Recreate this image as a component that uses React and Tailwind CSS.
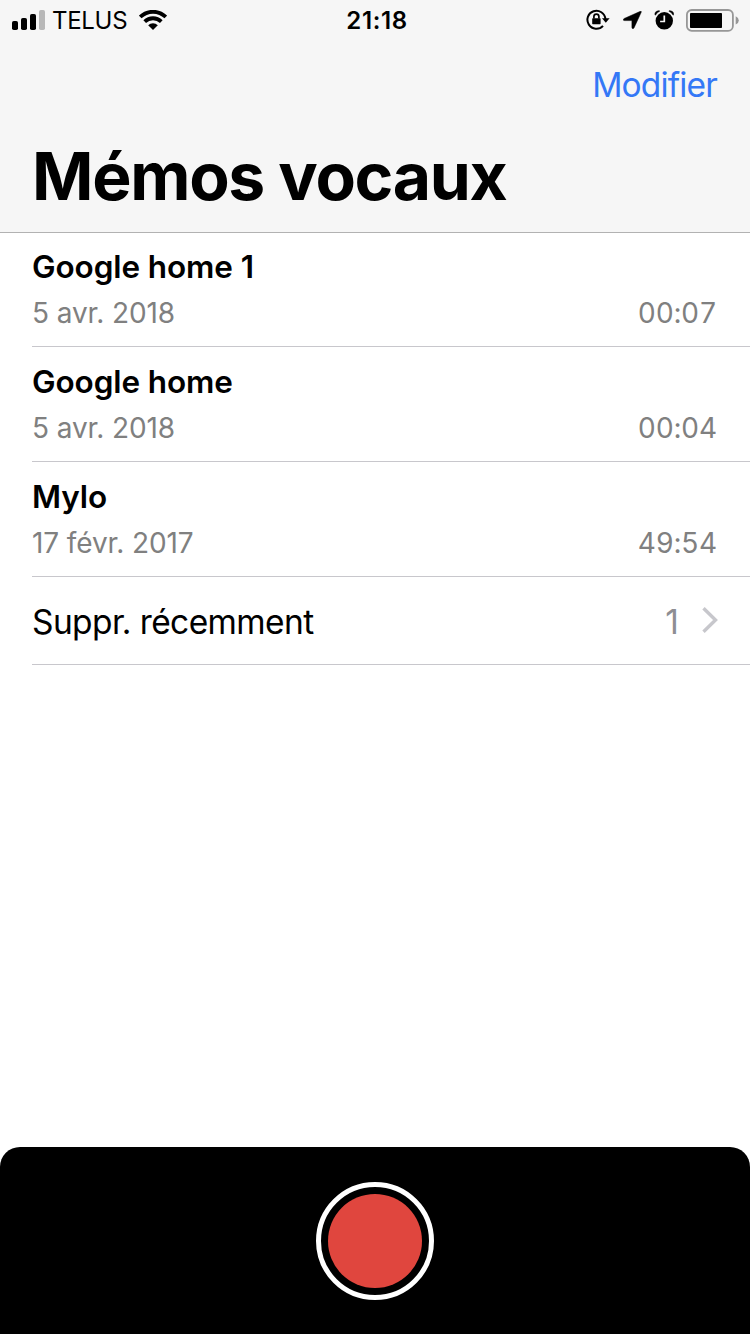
const memos = [
  { title: "Google home 1", date: "5 avr. 2018", length: "00:07" },
  { title: "Google home", date: "5 avr. 2018", length: "00:04" },
  { title: "Mylo", date: "17 févr. 2017", length: "49:54" },
];

function SignalIcon() {
  return (
    <svg width="33" height="20" viewBox="0 0 33 20">
      <rect x="0" y="11" width="6" height="9" rx="1.8" />
      <rect x="9" y="8" width="6" height="12" rx="1.8" />
      <rect x="18" y="4" width="6" height="16" rx="1.8" />
      <rect x="27" y="0" width="6" height="20" rx="1.8" fill="#b8b8b8" />
    </svg>
  );
}

function WifiIcon() {
  return (
    <svg width="28" height="20" viewBox="0 0 28 20">
      <g fill="none" stroke="#000" strokeWidth="3.8">
        <path d="M1.200 7A18.200 18.200 0 0 1 26.800 7" />
        <path d="M5.700 11.600A12 12 0 0 1 22.300 11.600" />
      </g>
      <path d="M9.200 15.200A6.800 6.800 0 0 1 18.800 15.200L14 20Z" />
    </svg>
  );
}

function LockIcon() {
  return (
    <svg width="24" height="22" viewBox="0 0 24 22">
      <path d="M17 16.900A9 9 0 1 1 19.400 10" fill="none" stroke="#000" strokeWidth="2" />
      <path d="M16 9.200H23.600L19.800 13.800Z" />
      <rect x="6.200" y="9.200" width="8.400" height="6" rx="0.6" />
      <path d="M7.900 9.500V7.600a2.500 2.500 0 0 1 5 0v1.900" fill="none" stroke="#000" strokeWidth="1.700" />
    </svg>
  );
}

function LocationIcon() {
  return (
    <svg width="19" height="18" viewBox="0 0 19 18">
      <path
        d="M17.400 0.300Q18.700 -0.100 18.200 1.300L11 16.900Q10.300 18.100 9.400 17.500Q8.900 17.200 8.900 16.500V10.200Q8.900 9.600 8.300 9.600H1.600Q0.300 9.500 0.300 8.700Q0.300 8 1.200 7.500Z"
        stroke="#000"
        strokeWidth="0.5"
      />
    </svg>
  );
}

function AlarmIcon() {
  return (
    <svg width="20" height="20" viewBox="0 0 20 20">
      <circle cx="10.300" cy="10.800" r="8.700" />
      <path d="M0.800 4.600Q0.600 1 5.200 0.600L5.800 1.200Q3 2.400 1.500 5.200ZM19.800 4.600Q20 1 15.400 0.600L14.800 1.200Q17.600 2.400 19.100 5.200Z" stroke="#000" strokeWidth="0.4" />
      <path d="M10.300 5.500V11.500H6.100" fill="none" stroke="#f6f6f6" strokeWidth="1.700" />
    </svg>
  );
}

function BatteryIcon() {
  return (
    <svg width="53" height="23" viewBox="0 0 53 23">
      <rect x="0.900" y="1" width="46" height="20.800" rx="4.800" fill="none" stroke="#979797" strokeWidth="1.800" />
      <rect x="4" y="4" width="32" height="15" rx="0.800" />
      <path d="M49.700 7.200Q52.800 8.700 52.800 11.400T49.700 15.600Z" fill="#979797" />
    </svg>
  );
}

function StatusBar() {
  return (
    <div className="grid h-10 grid-cols-3 items-center text-[24px]">
      <div className="flex h-10 items-center pl-3">
        <SignalIcon />
        <span className="mt-[2px] ml-[7px] w-[75px] tracking-[-0.3px]">TELUS</span>
        <span className="ml-3"><WifiIcon /></span>
      </div>
      <span className="mt-[2px] pl-1 text-center font-semibold tracking-[0.6px]">21:18</span>
      <div className="flex h-10 items-center justify-end pr-[11px]">
        <LockIcon />
        <span className="ml-[13px]"><LocationIcon /></span>
        <span className="ml-3"><AlarmIcon /></span>
        <span className="ml-3"><BatteryIcon /></span>
      </div>
    </div>
  );
}

export default function App() {
  return (
    <main className="flex h-[1334px] w-[750px] flex-col bg-white font-['Inter',sans-serif] text-black">
      <header className="h-[233px] border-b border-[#b2b2b2] bg-[#f6f6f6]">
        <StatusBar />
        <div className="flex h-[88px] items-center justify-end pt-[2px] pr-[33px] text-[33.5px] tracking-[-0.85px] text-[#3478f6]">
          Modifier
        </div>
        <h1 className="pl-8 text-[66px] leading-[97px] font-bold tracking-[-1.3px]">Mémos vocaux</h1>
      </header>
      <div className="-mt-px">
        {memos.map((m) => (
          <section key={m.title} className="ml-8 h-[115px] border-b border-[#c8c7cc] pr-[33px]">
            <h2 className="pt-[13px] text-[31.5px] leading-[44px] font-semibold tracking-[-0.1px]">{m.title}</h2>
            <div className="flex justify-between text-[28px] leading-[48px] text-[#808080]">
              <span className="tracking-[-0.1px]">{m.date}</span>
              <span className="tracking-[-0.2px] tabular-nums">{m.length}</span>
            </div>
          </section>
        ))}
        <div className="ml-8 flex h-[88px] items-center border-b border-[#c8c7cc] pr-8 text-[33.5px]">
          <span className="pt-[3px] tracking-[-0.6px]">Suppr. récemment</span>
          <span className="ml-auto pt-[3px] text-[#8e8e93]">1</span>
          <svg className="mb-px ml-[23px]" width="16" height="26" viewBox="0 0 16 26" fill="none" stroke="#c7c7cc" strokeWidth="3.400">
            <path d="M1.500 1.300L13.500 13L1.500 24.700" />
          </svg>
        </div>
      </div>
      <footer className="mt-auto flex h-[187px] items-center justify-center rounded-t-[20px] bg-black">
        <div className="size-[118px] rounded-full border-[5px] border-white p-[7px]">
          <div className="size-full rounded-full bg-[#e0463e]" />
        </div>
      </footer>
    </main>
  );
}
